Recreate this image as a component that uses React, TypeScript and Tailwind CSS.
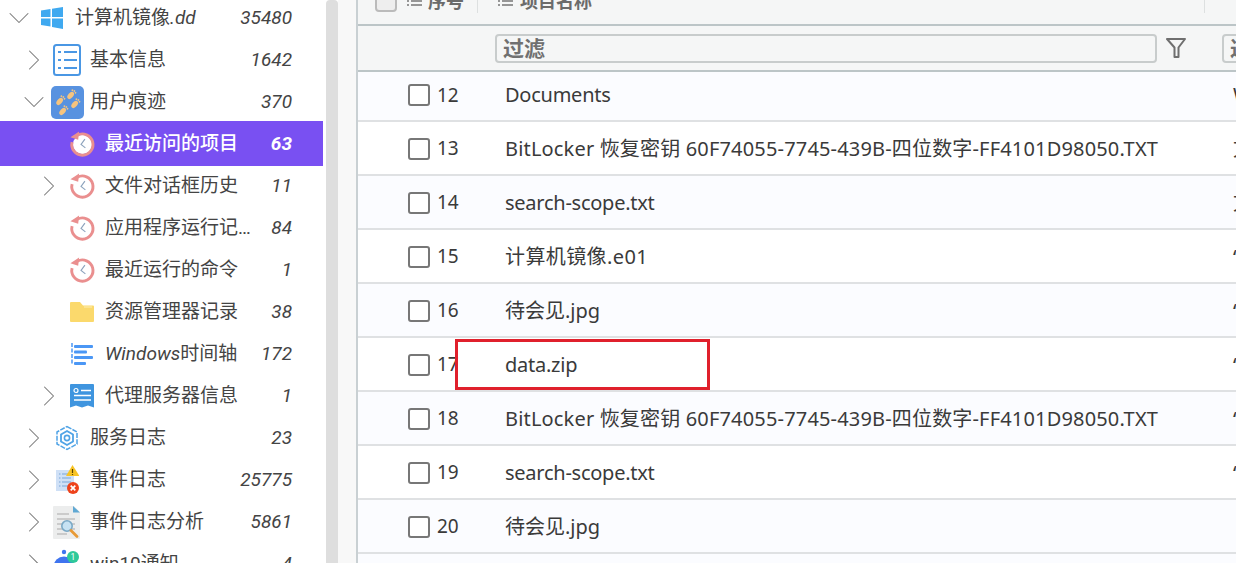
import { ChevronDown, ChevronRight } from "lucide-react";
import type { ReactNode } from "react";

const sans = "font-['Roboto','Noto_Sans_CJK_SC',sans-serif]";
const tableFont = "font-['Noto_Sans','Noto_Sans_CJK_SC',sans-serif]";

function ClockIcon({ light }: { light?: boolean }) {
  return (
    <svg width="27" height="27" viewBox="0 0 28 28" fill="none">
      {light && <circle cx="14" cy="14" r="10" fill="#ffffff" />}
      <path d="M8.5 4.5 A11 11 0 1 1 3.2 11.5" stroke="#ea8f8f" strokeWidth="3" />
      <path d="M10.5 0.5 L9.5 9 L1.5 6.5 Z" fill="#ea8f8f" />
      <path d="M16.5 8.5 L12.5 14 L17 17.5" stroke="#8da3bd" strokeWidth="1.2" />
    </svg>
  );
}

function WinIcon() {
  return (
    <svg width="22" height="22" viewBox="0 0 22 22" fill="#3fa9f0">
      <path d="M0 3.5 L9.5 2 V10 H0 Z" />
      <path d="M11 1.8 L22 0 V10 H11 Z" />
      <path d="M0 11.5 H9.5 V19.5 L0 18 Z" />
      <path d="M11 11.5 H22 V22 L11 20 Z" />
    </svg>
  );
}

function ListIcon() {
  return (
    <svg width="28" height="32" viewBox="0 0 28 32" fill="none">
      <rect x="1" y="1" width="26" height="30" rx="2.5" fill="#fff" stroke="#4a97e4" strokeWidth="2" />
      <path d="M11 8 H24 M11 16 H24 M11 24 H24" stroke="#4a97e4" strokeWidth="2" />
      <path d="M5 8 H8 M5 16 H8 M5 24 H8" stroke="#4a97e4" strokeWidth="2" />
    </svg>
  );
}

function Foot({ x, y }: { x: number; y: number }) {
  return (
    <g transform={`translate(${x} ${y}) rotate(-50)`} fill="#f6c47e">
      <ellipse cx="-0.5" cy="0" rx="4.2" ry="2.5" />
      <circle cx="4.6" cy="-2" r="0.9" />
      <circle cx="5.2" cy="0" r="0.9" />
      <circle cx="4.6" cy="2" r="0.9" />
    </g>
  );
}

function FeetIcon() {
  return (
    <svg width="33" height="33" viewBox="0 0 33 33">
      <rect width="33" height="33" rx="5" fill="#5892e0" />
      <Foot x={20} y={9} />
      <Foot x={9} y={15} />
      <Foot x={24} y={18} />
      <Foot x={12} y={25} />
    </svg>
  );
}

function FolderIcon() {
  return (
    <svg width="24" height="20" viewBox="0 0 24 20">
      <path d="M0 1 Q0 0 1 0 H10 L13 3.5 H23 Q24 3.5 24 4.5 V19 Q24 20 23 20 H1 Q0 20 0 19 Z" fill="#fbd96c" />
      <path d="M14 5 H22" stroke="#fdeeb5" strokeWidth="1" />
    </svg>
  );
}

function TimelineIcon() {
  return (
    <svg width="24" height="24" viewBox="0 0 24 24">
      <path d="M2 1 V23" stroke="#4b97f5" strokeWidth="1.5" strokeDasharray="4 1.5" />
      <g fill="#4b97f5">
        <rect x="4" y="3" width="19" height="3" rx="1" />
        <rect x="4" y="8.5" width="13" height="3" rx="1" />
        <rect x="4" y="14" width="19" height="3" rx="1" />
        <rect x="4" y="20" width="12" height="3" rx="1" />
      </g>
    </svg>
  );
}

function ProxyIcon() {
  return (
    <svg width="24" height="24" viewBox="0 0 24 24">
      <path d="M0 1 Q0 0 1 0 H23 Q24 0 24 1 V23.5 L18 21.5 L12 23.5 L6 21.5 L0 23.5 Z" fill="#3f95df" />
      <circle cx="6" cy="6.5" r="2" fill="none" stroke="#fff" strokeWidth="1.2" />
      <path d="M11 6.5 H21 M4 11.5 H21 M4 16 H21" stroke="#fff" strokeWidth="1.3" />
    </svg>
  );
}

function ServiceIcon() {
  return (
    <svg width="24" height="26" viewBox="0 0 24 26" fill="none" stroke="#4fa3e6">
      <path d="M12 1.5 L22 7 V19 L12 24.5 L2 19 V7 Z" strokeWidth="1.5" strokeDasharray="5 1.2" />
      <path d="M12 6 L18 9.5 V16.5 L12 20 L6 16.5 V9.5 Z" strokeWidth="1.8" />
      <circle cx="12" cy="13" r="2.6" strokeWidth="1.6" />
    </svg>
  );
}

function EventIcon() {
  return (
    <svg width="24" height="30" viewBox="0 0 24 30">
      <rect x="1" y="5" width="18" height="21" fill="#cfe0f6" />
      <path d="M4 9 H16 M4 13 H16 M4 17 H16 M4 21 H14" stroke="#7ba6d8" strokeWidth="1.2" strokeDasharray="1.5 1.5 9 0" />
      <path d="M17.5 0 L24.5 11 H11 Z" fill="#f7c325" />
      <path d="M17.5 4 V8 M17.5 9 V10" stroke="#5b4300" strokeWidth="1.2" />
      <circle cx="18" cy="23" r="6" fill="#ee431c" />
      <path d="M15.7 20.7 L20.3 25.3 M20.3 20.7 L15.7 25.3" stroke="#fff" strokeWidth="1.7" />
    </svg>
  );
}

function AnalysisIcon() {
  return (
    <svg width="28" height="33" viewBox="0 0 28 33">
      <path d="M1 0 H21 L27 6 V32 Q27 33 26 33 H1 Q0 33 0 32 V1 Q0 0 1 0 Z" fill="#eceded" />
      <path d="M20 0 L27 6.5 H20 Z" fill="#5fa8d3" />
      <path d="M4 8 H16 M4 13 H22 M4 18 H22 M4 23 H22 M4 28 H14" stroke="#a9a9a9" strokeWidth="1.2" />
      <circle cx="14" cy="20" r="5.2" fill="#c6e2f3" stroke="#7aa9c6" strokeWidth="1.6" />
      <path d="M18 24.5 L24 30.5" stroke="#e79a37" strokeWidth="2.8" strokeLinecap="round" />
    </svg>
  );
}

function NotifyIcon() {
  return (
    <svg width="28" height="30" viewBox="0 0 28 30">
      <circle cx="11" cy="3" r="2.2" fill="#3f74ef" />
      <circle cx="11" cy="18" r="10.5" fill="#3f74ef" />
      <circle cx="20" cy="8" r="6" fill="#2fc99a" />
      <text x="20" y="11" fontSize="8.5" fill="#fff" textAnchor="middle">1</text>
    </svg>
  );
}

function ListGlyph() {
  return (
    <svg width="15" height="12" viewBox="0 0 15 12" stroke="#777" strokeWidth="1.4">
      <path d="M0 2 H2 M4 2 H15 M0 6 H2 M4 6 H15 M0 10 H2 M4 10 H15" />
    </svg>
  );
}

type TreeRow = {
  label: ReactNode;
  count: string;
  icon: ReactNode;
  level: 0 | 1 | 2;
  arrow?: "open" | "closed";
  active?: boolean;
};

const rows: TreeRow[] = [
  { label: <>计算机镜像<i>.dd</i></>, count: "35480", icon: <WinIcon />, level: 0, arrow: "open" },
  { label: "基本信息", count: "1642", icon: <ListIcon />, level: 1, arrow: "closed" },
  { label: "用户痕迹", count: "370", icon: <FeetIcon />, level: 1, arrow: "open" },
  { label: "最近访问的项目", count: "63", icon: <ClockIcon light />, level: 2, active: true },
  { label: "文件对话框历史", count: "11", icon: <ClockIcon />, level: 2, arrow: "closed" },
  { label: "应用程序运行记录", count: "84", icon: <ClockIcon />, level: 2 },
  { label: "最近运行的命令", count: "1", icon: <ClockIcon />, level: 2 },
  { label: "资源管理器记录", count: "38", icon: <FolderIcon />, level: 2 },
  { label: <><i>Windows</i>时间轴</>, count: "172", icon: <TimelineIcon />, level: 2 },
  { label: "代理服务器信息", count: "1", icon: <ProxyIcon />, level: 2, arrow: "closed" },
  { label: "服务日志", count: "23", icon: <ServiceIcon />, level: 1, arrow: "closed" },
  { label: "事件日志", count: "25775", icon: <EventIcon />, level: 1, arrow: "closed" },
  { label: "事件日志分析", count: "5861", icon: <AnalysisIcon />, level: 1, arrow: "closed" },
  { label: <>win10通知</>, count: "4", icon: <NotifyIcon />, level: 1, arrow: "closed" },
];

function Row({ row }: { row: TreeRow }) {
  const pad = row.level === 0 ? "pl-[8px]" : row.level === 1 ? "pl-[23px]" : "pl-[38px]";
  return (
    <div
      className={`flex shrink-0 items-center pr-[31px] ${pad} ${
        row.active ? "relative -mt-[2px] -mb-[1px] h-[45px] bg-[#7950f2] pt-[1px] text-white" : "h-[42px] text-[#444]"
      }`}
    >
      <span className="flex w-[22px] shrink-0 justify-center text-[#777]">
        {row.arrow === "open" && <ChevronDown className="shrink-0" size={36} strokeWidth={0.7} />}
        {row.arrow === "closed" && <ChevronRight className="shrink-0" size={36} strokeWidth={0.7} />}
      </span>
      <span className="ml-[5px] flex h-[34px] w-[34px] shrink-0 items-center justify-center">{row.icon}</span>
      <span className={`ml-[6px] w-[150px] truncate text-[19px] ${row.active ? "font-medium" : ""}`}>{row.label}</span>
      <span className={`ml-auto text-[19px] italic ${row.active ? "font-bold" : ""}`}>{row.count}</span>
    </div>
  );
}

function Box() {
  return <span className="h-[22px] w-[22px] shrink-0 rounded-[3px] border-2 border-[#777] bg-white" />;
}

const files = [
  ["12", "Documents", "Windows", "tracking-[-0.25px]"],
  ["13", "BitLocker 恢复密钥 60F74055-7745-439B-四位数字-FF4101D98050.TXT", "文件", "tracking-[0.17px]"],
  ["14", "search-scope.txt", "文件", "tracking-[-0.25px]"],
  ["15", "计算机镜像.e01", "“", "tracking-[0.4px]"],
  ["16", "待会见.jpg", "“", ""],
  ["17", "data.zip", "“", "tracking-[-0.25px]"],
  ["18", "BitLocker 恢复密钥 60F74055-7745-439B-四位数字-FF4101D98050.TXT", "“", "tracking-[0.17px]"],
  ["19", "search-scope.txt", "“", "tracking-[-0.25px]"],
  ["20", "待会见.jpg", "", ""],
];

export default function App() {
  return (
    <div className={`flex h-[563px] w-[1236px] overflow-hidden bg-white ${sans}`}>
      <div className="flex h-full w-[323px] shrink-0 flex-col overflow-hidden">
        <div className="-mt-[3px] flex flex-col">
          {rows.map((row, i) => (
            <Row key={i} row={row} />
          ))}
        </div>
      </div>
      <div className="ml-[3px] h-full w-[12px] shrink-0 rounded-t-[4px] bg-[#dedede]" />
      <div className="w-[18px] shrink-0 bg-[#f8f8f8]" />

      <div className={`relative flex h-full min-w-0 flex-1 flex-col overflow-hidden border-l-2 border-[#c9d0d3] bg-[#fbfcff] ${tableFont}`}>
        <div className="h-[26px] shrink-0 border-b-2 border-[#bcc5c7] bg-[#f5f6f6]" />
        <div className="absolute left-[17px] top-[-11px] flex h-[24px] items-center text-[18px] font-bold text-[#6b6b6b]">
          <span className="h-[22px] w-[22px] rounded-[4px] border-2 border-[#bbb] bg-[#eee]" />
          <span className="ml-[10px]"><ListGlyph /></span>
          <span className="ml-[6px]">序号</span>
          <span className="ml-[13px] h-[24px] w-px bg-[#dde0e0]" />
          <span className="ml-[20px]"><ListGlyph /></span>
          <span className="ml-[7px]">项目名称</span>
        </div>
        <div className="absolute left-[846px] top-[-11px] h-[24px] w-px bg-[#dde0e0]" />
        <div className="flex h-[46px] shrink-0 items-center border-b-2 border-[#bcc5c7] bg-[#f5f6f6]">
          <span className="ml-[119px] h-[24px] w-px bg-[#dde0e0]" />
          <div className="ml-[18px] flex h-[29px] w-[662px] shrink-0 items-center rounded-[4px] border-2 border-[#c8cccc] pt-[2px] pl-[6px] text-[21px] font-bold text-[#707070]">
            过滤
          </div>
          <svg className="ml-[9px] shrink-0" width="20" height="22" viewBox="0 0 20 22" fill="none" stroke="#6f6f6f" strokeWidth="2" strokeLinejoin="round">
            <path d="M1 2 H19 L12.5 10.5 V20 H8.5 V10.5 Z" />
          </svg>
          <span className="ml-[18px] h-[24px] w-px bg-[#dde0e0]" />
          <div className="ml-[18px] flex h-[29px] w-[40px] shrink-0 items-center overflow-hidden rounded-[4px] border-2 border-[#c8cccc] pt-[2px] pl-[6px] text-[21px] font-bold whitespace-nowrap text-[#707070]">
            过滤
          </div>
        </div>
        {files.map(([no, name, kind, fit], i) => (
          <div
            key={no}
            className={`flex shrink-0 items-center border-b-2 border-[#dfe1e3] text-[20px] text-[#3a3a3a] ${i === 0 ? "h-[50px] pb-[2px]" : "h-[54px] pt-[1px]"} ${i % 2 === 0 ? "bg-[#fbfcff]" : "bg-white"}`}
          >
            <span className="ml-[50px] flex w-[97px] shrink-0 items-center gap-[7px]">
              <Box />
              <span className="text-[19px]">{no}</span>
            </span>
            <span className={`w-[728px] shrink-0 whitespace-nowrap ${fit}`}>{name}</span>
            <span className="whitespace-nowrap">{kind}</span>
          </div>
        ))}
        <div className="absolute left-[97px] top-[339px] h-[51px] w-[255px] border-[3px] border-[#e0202c]" />
      </div>
    </div>
  );
}
